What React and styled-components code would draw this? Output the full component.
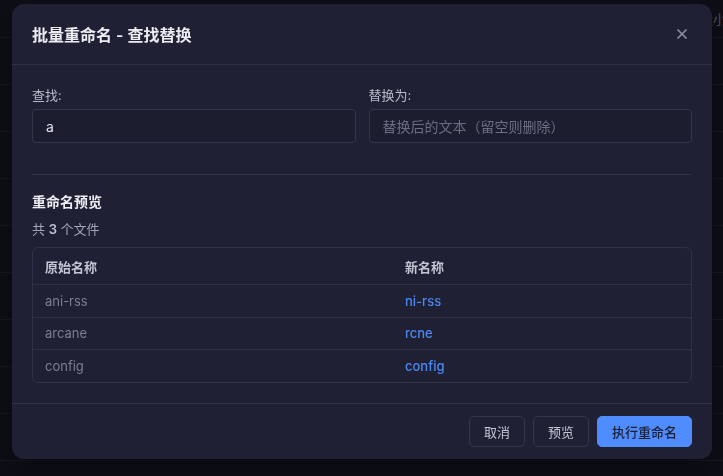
import React, { useState } from "react";
import styled, { createGlobalStyle } from "styled-components";
import { X } from "lucide-react";

const GlobalStyle = createGlobalStyle`
  html, body {
    margin: 0;
    padding: 0;
    background: #23233a;
    font-family: "Inter", "Noto Sans CJK SC", sans-serif;
    -webkit-font-smoothing: antialiased;
  }
  * { box-sizing: border-box; }
`;

const rows = [
  { from: "ani-rss", to: "ni-rss" },
  { from: "arcane", to: "rcne" },
  { from: "config", to: "config" },
];

function App() {
  const [find, setFind] = useState("a");
  const [replace, setReplace] = useState("");

  return (
    <>
      <GlobalStyle />
      <Page>
        <BgHeader>
          <BgHeadCell>大小</BgHeadCell>
        </BgHeader>
        {Array.from({ length: 9 }).map((_, i) => (
          <BgRow key={i} />
        ))}
      </Page>

      <Overlay>
        <Dialog>
          <Header>
            <Title>批量重命名 - 查找替换</Title>
            <CloseBtn aria-label="close">
              <X size={16} strokeWidth={2.6} />
            </CloseBtn>
          </Header>

          <Body>
            <Fields>
              <Field>
                <Label>查找:</Label>
                <Input value={find} onChange={(e) => setFind(e.target.value)} />
              </Field>
              <Field>
                <Label>替换为:</Label>
                <Input
                  value={replace}
                  placeholder="替换后的文本（留空则删除）"
                  onChange={(e) => setReplace(e.target.value)}
                />
              </Field>
            </Fields>

            <Divider />

            <SectionTitle>重命名预览</SectionTitle>
            <Count>
              共 <b>3</b> 个文件
            </Count>

            <Table>
              <HeadRow>
                <HeadCell>原始名称</HeadCell>
                <HeadCell>新名称</HeadCell>
              </HeadRow>
              {rows.map((r) => (
                <Row key={r.from}>
                  <Cell>{r.from}</Cell>
                  <Cell $changed>{r.to}</Cell>
                </Row>
              ))}
            </Table>
          </Body>

          <Footer>
            <Button>取消</Button>
            <Button>预览</Button>
            <Button $primary>执行重命名</Button>
          </Footer>
        </Dialog>
      </Overlay>
    </>
  );
}

const Page = styled.div`
  min-height: 476px;
  background: #23233a;
  overflow: hidden;
`;

const BgHeader = styled.div`
  height: 38px;
  display: flex;
  justify-content: flex-end;
  align-items: center;
  border-bottom: 1px solid #3c3c55;
`;

const BgHeadCell = styled.span`
  font-size: 13px;
  color: #d0d0de;
  margin-right: -3px;
`;

const BgRow = styled.div`
  height: 47px;
  border-bottom: 1px solid #3c3c55;
`;

const Overlay = styled.div`
  position: fixed;
  inset: 0;
  background: rgba(0, 0, 0, 0.6);
  display: flex;
  justify-content: center;
  align-items: flex-start;
  padding-top: 4px;
`;

const Dialog = styled.div`
  width: 700px;
  margin-left: 1px;
  background: #1f2033;
  border-radius: 12px;
  display: flex;
  flex-direction: column;
  overflow: hidden;
  box-shadow: 0 10px 30px rgba(0, 0, 0, 0.4);
`;

const Header = styled.div`
  height: 61px;
  padding: 0 20px;
  display: flex;
  align-items: center;
  justify-content: space-between;
  border-bottom: 1px solid #2f3046;
`;

const Title = styled.h2`
  margin: 0;
  font-size: 16px;
  font-weight: 600;
  color: #ececf3;
`;

const CloseBtn = styled.button`
  width: 20px;
  height: 20px;
  padding: 0;
  border: 0;
  background: transparent;
  color: #8d8ea3;
  display: flex;
  align-items: center;
  justify-content: center;
  cursor: pointer;
`;

const Body = styled.div`
  padding: 20px;
`;

const Fields = styled.div`
  display: grid;
  grid-template-columns: 1fr 1fr;
  gap: 13px;
  margin-bottom: 31px;
`;

const Field = styled.div`
  display: flex;
  flex-direction: column;
`;

const Label = styled.label`
  font-size: 13px;
  line-height: 20px;
  color: #b8b9c8;
  margin-bottom: 4px;
`;

const Input = styled.input`
  height: 34px;
  padding: 0 13px;
  background: #1c1d2f;
  border: 1px solid #34354c;
  border-radius: 4px;
  color: #e4e4ee;
  font-family: inherit;
  font-size: 14px;
  outline: none;

  &::placeholder {
    color: #6c6d82;
  }
`;

const Divider = styled.div`
  height: 1px;
  background: #2f3046;
  margin-bottom: 16px;
`;

const SectionTitle = styled.h3`
  margin: 0 0 6px;
  font-size: 14px;
  line-height: 22px;
  font-weight: 600;
  color: #ececf3;
`;

const Count = styled.div`
  font-size: 13px;
  line-height: 20px;
  color: #a3a4b6;
  margin-bottom: 8px;

  b {
    font-weight: 600;
    color: #c2c3d2;
  }
`;

const Table = styled.div`
  border: 1px solid #303148;
  border-radius: 6px;
  overflow: hidden;
`;

const HeadRow = styled.div`
  display: grid;
  grid-template-columns: 360px 1fr;
  height: 36px;
  align-items: center;
`;

const HeadCell = styled.div`
  padding: 0 12px;
  font-size: 13px;
  font-weight: 600;
  color: #c4c5d3;
`;

const Row = styled.div`
  display: grid;
  grid-template-columns: 360px 1fr;
  height: 32.67px;
  align-items: center;
  border-top: 1px solid #2e2f45;
`;

const Cell = styled.div`
  padding: 0 12px;
  font-size: 13px;
  color: ${(p) => (p.$changed ? "#4c87f0" : "#7d7e92")};
  font-weight: ${(p) => (p.$changed ? 500 : 400)};
`;

const Footer = styled.div`
  display: flex;
  justify-content: flex-end;
  gap: 8px;
  padding: 12px 20px;
  border-top: 1px solid #2f3046;
`;

const Button = styled.button`
  height: 31px;
  padding: 0 14px;
  border-radius: 5px;
  font-family: inherit;
  font-size: 13px;
  cursor: pointer;
  border: 1px solid ${(p) => (p.$primary ? "#4f8dff" : "#35364c")};
  background: ${(p) => (p.$primary ? "#4f8dff" : "transparent")};
  color: ${(p) => (p.$primary ? "#1c2034" : "#c4c5d3")};
  font-weight: ${(p) => (p.$primary ? 500 : 400)};
`;

export default App;
